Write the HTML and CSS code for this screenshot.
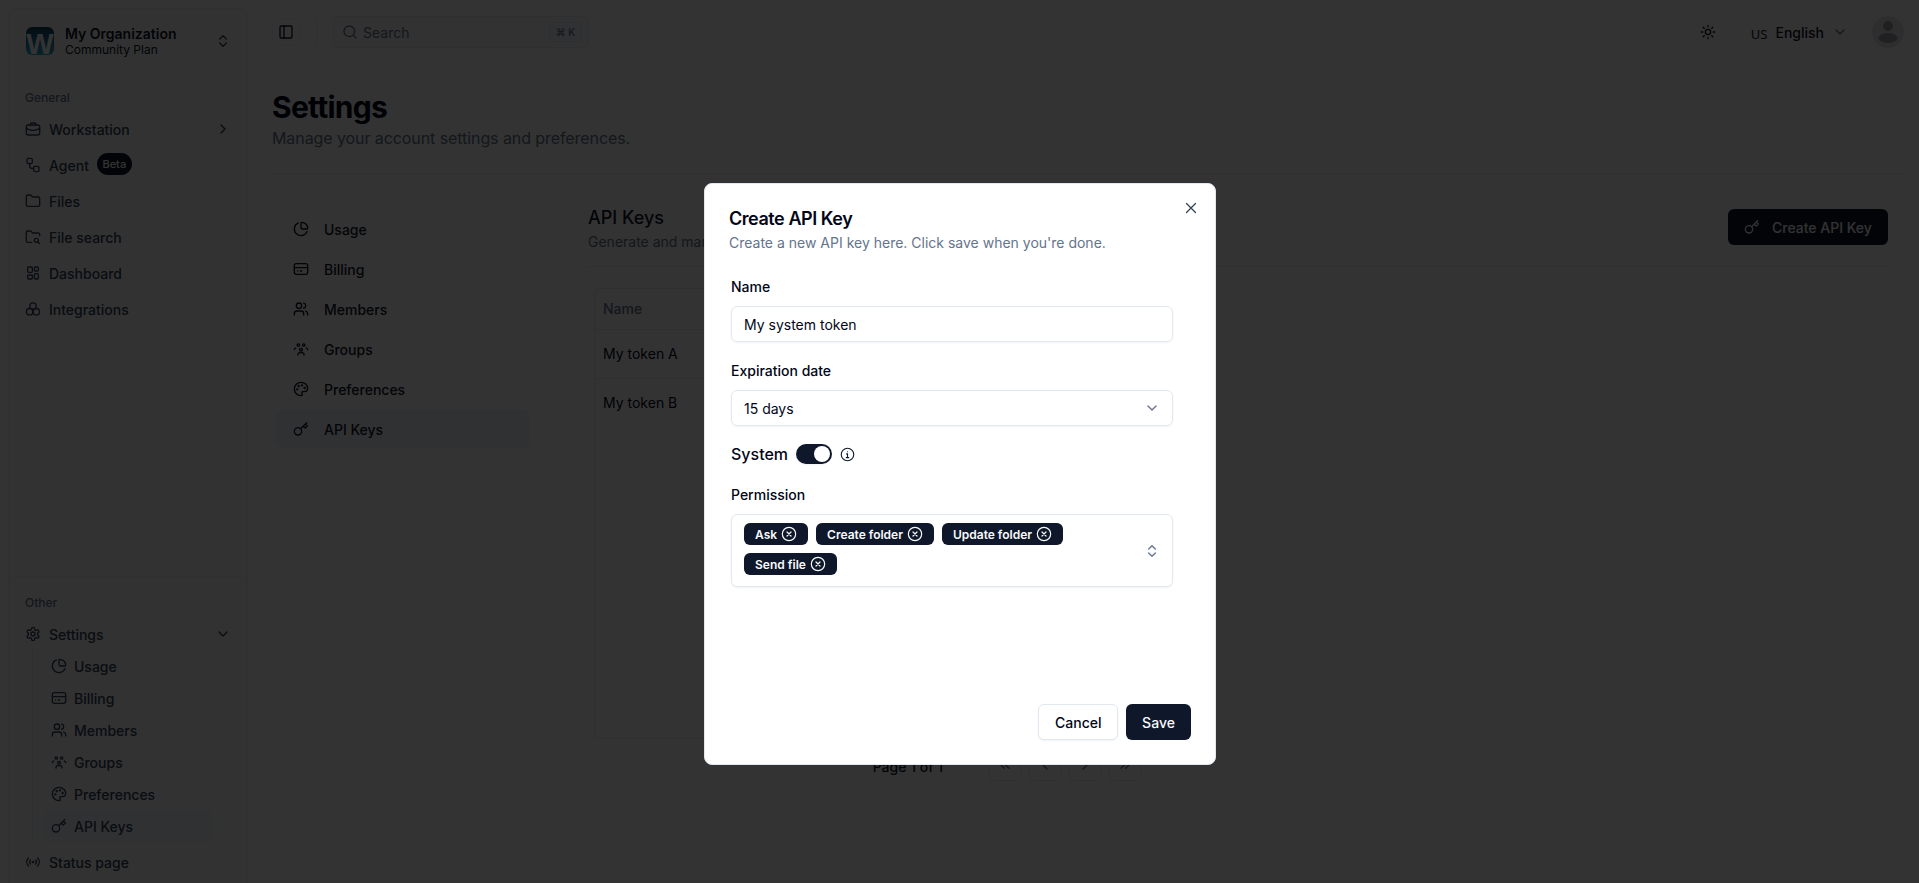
FILE: index.html
```html
<!DOCTYPE html>
<html lang="en">
<head>
<meta charset="utf-8">
<title>Settings</title>
<link rel="stylesheet" href="styles.css">
</head>
<body>
<svg class="defs" aria-hidden="true">
  <defs>
    <g id="i-usage"><path d="M21 12c.6 0 1-.4 1-1a9 9 0 0 0-9-9c-.6 0-1 .4-1 1v7c0 1.1.9 2 2 2z"/><path d="M21.2 15.9A10 10 0 1 1 8 2.8"/></g>
    <g id="i-billing"><rect x="2" y="4" width="20" height="16" rx="3"/><path d="M2 10h20M7 15h.01M11 15h2"/></g>
    <g id="i-members"><path d="M16 21v-2a4 4 0 0 0-4-4H6a4 4 0 0 0-4 4v2"/><circle cx="9" cy="7" r="4"/><path d="M22 21v-2a4 4 0 0 0-3-3.900M16 3.100a4 4 0 0 1 0 7.800"/></g>
    <g id="i-groups"><circle cx="8" cy="6" r="1.800"/><circle cx="16" cy="6" r="1.800"/><circle cx="12" cy="13" r="2"/><path d="M7.500 21v-.5a3 3 0 0 1 3-3h3a3 3 0 0 1 3 3v.5M2 13a3.500 3.500 0 0 1 2-2.500M22 13a3.500 3.500 0 0 0-2-2.500"/></g>
    <g id="i-palette"><path d="M12 22a1 1 0 0 1 0-20 10 9 0 0 1 10 9 5 5 0 0 1-5 5h-2.200a1.800 1.800 0 0 0-1.400 2.900l.3.400a1.800 1.800 0 0 1-1.700 2.700z"/><circle cx="13.500" cy="6.500" r=".8"/><circle cx="17.500" cy="10.500" r=".8"/><circle cx="6.500" cy="12.500" r=".8"/><circle cx="8.500" cy="7.500" r=".8"/></g>
    <g id="i-key"><circle cx="7.500" cy="15.500" r="5.500"/><path d="m11.500 11.500 9-9M15.500 7.500l3 3 3-3-3-3"/></g>
    <g id="i-cx"><circle cx="12" cy="12" r="10"/><path d="m15 9-6 6M9 9l6 6"/></g>
    <path id="i-down" d="m6 9 6 6 6-6"/>
    <g id="i-updown"><path d="m7 15 5 5 5-5M7 9l5-5 5 5"/></g>
  </defs>
</svg>

<div class="app">
  <aside class="sidebar">
    <div class="org">
      <div class="logo">W</div>
      <div class="org-text">
        <div class="org-name">My Organization</div>
        <div class="org-plan">Community Plan</div>
      </div>
      <svg class="ic" viewBox="0 0 24 24"><use href="#i-updown"/></svg>
    </div>

    <div class="nav-group">
      <div class="nav-label">General</div>
      <a class="nav-item">
        <svg class="ic" viewBox="0 0 24 24"><rect x="2" y="6" width="20" height="15" rx="3"/><path d="M8 6V4.500A1.500 1.500 0 0 1 9.500 3h5A1.500 1.500 0 0 1 16 4.500V6M2 11c3 2 6 3 10 3s7-1 10-3"/></svg>
        <span class="grow">Workstation</span>
        <svg class="ic" viewBox="0 0 24 24"><path d="m9 18 6-6-6-6"/></svg>
      </a>
      <a class="nav-item">
        <svg class="ic" viewBox="0 0 24 24"><rect x="3" y="2" width="8" height="8" rx="2"/><rect x="13" y="14" width="8" height="8" rx="2"/><path d="M7 10v4a3 3 0 0 0 3 3h3"/></svg>
        <span>Agent</span><span class="beta">Beta</span>
      </a>
      <a class="nav-item">
        <svg class="ic" viewBox="0 0 24 24"><path d="M20 20a2 2 0 0 0 2-2V8a2 2 0 0 0-2-2h-7.900a2 2 0 0 1-1.700-.9l-.8-1.200A2 2 0 0 0 7.900 3H4a2 2 0 0 0-2 2v13a2 2 0 0 0 2 2z"/></svg>
        <span>Files</span>
      </a>
      <a class="nav-item">
        <svg class="ic" viewBox="0 0 24 24"><path d="M10 20H4a2 2 0 0 1-2-2V5a2 2 0 0 1 2-2h3.900a2 2 0 0 1 1.700.9l.8 1.200a2 2 0 0 0 1.700.9H20a2 2 0 0 1 2 2v2"/><circle cx="17" cy="17" r="3"/><path d="m22 22-2.800-2.800"/></svg>
        <span>File search</span>
      </a>
      <a class="nav-item">
        <svg class="ic" viewBox="0 0 24 24"><rect x="4" y="3" width="7" height="8" rx="1.500"/><rect x="14" y="3" width="6" height="6" rx="1.500"/><rect x="14" y="13" width="6" height="8" rx="1.500"/><rect x="4" y="15" width="7" height="6" rx="1.500"/></svg>
        <span>Dashboard</span>
      </a>
      <a class="nav-item">
        <svg class="ic" viewBox="0 0 24 24"><circle cx="12" cy="7.500" r="4.800"/><circle cx="7" cy="16" r="4.800"/><circle cx="17" cy="16" r="4.800"/></svg>
        <span>Integrations</span>
      </a>
    </div>

    <div class="nav-spacer"></div>

    <div class="nav-group other">
      <div class="nav-label">Other</div>
      <a class="nav-item">
        <svg class="ic" viewBox="0 0 24 24"><path d="M12.200 2h-.4a2 2 0 0 0-2 2v.2a2 2 0 0 1-1 1.700l-.4.300a2 2 0 0 1-2 0l-.2-.1a2 2 0 0 0-2.700.7l-.2.400a2 2 0 0 0 .7 2.700l.2.100a2 2 0 0 1 1 1.700v.6a2 2 0 0 1-1 1.700l-.2.100a2 2 0 0 0-.7 2.700l.2.400a2 2 0 0 0 2.700.7l.2-.1a2 2 0 0 1 2 0l.4.300a2 2 0 0 1 1 1.700v.2a2 2 0 0 0 2 2h.4a2 2 0 0 0 2-2v-.2a2 2 0 0 1 1-1.700l.4-.3a2 2 0 0 1 2 0l.2.100a2 2 0 0 0 2.700-.7l.2-.4a2 2 0 0 0-.7-2.700l-.2-.1a2 2 0 0 1-1-1.700v-.6a2 2 0 0 1 1-1.700l.2-.1a2 2 0 0 0 .7-2.700l-.2-.4a2 2 0 0 0-2.700-.7l-.2.100a2 2 0 0 1-2 0l-.4-.3a2 2 0 0 1-1-1.700V4a2 2 0 0 0-2-2z"/><circle cx="12" cy="12" r="3"/></svg>
        <span class="grow">Settings</span>
        <svg class="ic" viewBox="0 0 24 24"><use href="#i-down"/></svg>
      </a>
      <div class="subnav">
        <a class="sub-item"><svg class="ic" viewBox="0 0 24 24"><use href="#i-usage"/></svg><span>Usage</span></a>
        <a class="sub-item"><svg class="ic" viewBox="0 0 24 24"><use href="#i-billing"/></svg><span>Billing</span></a>
        <a class="sub-item"><svg class="ic" viewBox="0 0 24 24"><use href="#i-members"/></svg><span>Members</span></a>
        <a class="sub-item"><svg class="ic" viewBox="0 0 24 24"><use href="#i-groups"/></svg><span>Groups</span></a>
        <a class="sub-item"><svg class="ic" viewBox="0 0 24 24"><use href="#i-palette"/></svg><span>Preferences</span></a>
        <a class="sub-item active"><svg class="ic" viewBox="0 0 24 24"><use href="#i-key"/></svg><span>API Keys</span></a>
      </div>
      <a class="nav-item">
        <svg class="ic" viewBox="0 0 24 24"><path d="M5 6a9 9 0 0 0 0 12M8 9a5 5 0 0 0 0 6M16 9a5 5 0 0 1 0 6M19 6a9 9 0 0 1 0 12"/><circle cx="12" cy="12" r="1"/></svg>
        <span>Status page</span>
      </a>
    </div>
  </aside>

  <main class="main">
    <header class="topbar">
      <button class="toggle"><svg class="ic" viewBox="0 0 24 24"><rect x="3" y="3" width="18" height="18" rx="2"/><path d="M9 3v18"/></svg></button>
      <span class="vsep"></span>
      <div class="search">
        <svg class="ic" viewBox="0 0 24 24"><circle cx="11" cy="11" r="8"/><path d="m21 21-4.300-4.300"/></svg>
        <span class="grow search-text">Search</span>
        <kbd class="kbd">⌘ K</kbd>
      </div>
      <div class="grow"></div>
      <svg class="ic sun" viewBox="0 0 24 24"><circle cx="12" cy="12" r="4"/><path d="M12 2v2M12 20v2M4.900 4.900l1.400 1.400M17.700 17.700l1.400 1.400M2 12h2M20 12h2M6.300 17.700l-1.400 1.400M19.100 4.900l-1.400 1.400"/></svg>
      <div class="lang">
        <span class="flag">US</span>
        <span>English</span>
        <svg class="ic" viewBox="0 0 24 24"><use href="#i-down"/></svg>
      </div>
      <div class="avatar">
        <svg viewBox="0 0 32 32"><circle cx="16" cy="10" r="5"/><ellipse cx="16" cy="22" rx="9.500" ry="5"/></svg>
      </div>
    </header>

    <section class="page-head">
      <h1>Settings</h1>
      <p>Manage your account settings and preferences.</p>
    </section>

    <div class="settings">
      <nav class="settings-nav">
        <a class="set-item"><svg class="ic" viewBox="0 0 24 24"><use href="#i-usage"/></svg><span>Usage</span></a>
        <a class="set-item"><svg class="ic" viewBox="0 0 24 24"><use href="#i-billing"/></svg><span>Billing</span></a>
        <a class="set-item"><svg class="ic" viewBox="0 0 24 24"><use href="#i-members"/></svg><span>Members</span></a>
        <a class="set-item"><svg class="ic" viewBox="0 0 24 24"><use href="#i-groups"/></svg><span>Groups</span></a>
        <a class="set-item"><svg class="ic" viewBox="0 0 24 24"><use href="#i-palette"/></svg><span>Preferences</span></a>
        <a class="set-item active"><svg class="ic" viewBox="0 0 24 24"><use href="#i-key"/></svg><span>API Keys</span></a>
      </nav>

      <div class="content">
        <div class="content-head">
          <div class="grow">
            <h2>API Keys</h2>
            <p>Generate and manage</p>
          </div>
          <button class="create"><svg class="ic" viewBox="0 0 24 24"><use href="#i-key"/></svg><span>Create API Key</span></button>
        </div>

        <div class="table-wrap">
          <div class="table">
            <div class="t-row t-head"><span>Name</span></div>
            <div class="t-row"><span>My token A</span></div>
            <div class="t-row"><span>My token B</span></div>
          </div>
          <div class="pager">
            <span class="pager-text">Page 1 of 1</span>
            <div class="pager-btns">
              <button><svg class="ic" viewBox="0 0 24 24"><path d="m11 17-5-5 5-5M18 17l-5-5 5-5"/></svg></button>
              <button><svg class="ic" viewBox="0 0 24 24"><path d="m15 18-6-6 6-6"/></svg></button>
              <button><svg class="ic" viewBox="0 0 24 24"><path d="m9 18 6-6-6-6"/></svg></button>
              <button><svg class="ic" viewBox="0 0 24 24"><path d="m6 17 5-5-5-5M13 17l5-5-5-5"/></svg></button>
            </div>
          </div>
        </div>
      </div>
    </div>
  </main>
</div>

<div class="overlay"></div>

<div class="dialog" role="dialog">
  <svg class="ic close" viewBox="0 0 24 24"><path d="M18 6 6 18M6 6l12 12"/></svg>
  <h3>Create API Key</h3>
  <p class="dialog-desc">Create a new API key here. Click save when you're done.</p>

  <form class="form">
    <div class="field">
      <label>Name</label>
      <div class="input">My system token</div>
    </div>
    <div class="field">
      <label>Expiration date</label>
      <div class="input select"><span class="grow">15 days</span><svg class="ic muted" viewBox="0 0 24 24"><use href="#i-down"/></svg></div>
    </div>
    <div class="system">
      <span class="system-label">System</span>
      <span class="switch"><span class="knob"></span></span>
      <svg class="ic info" viewBox="0 0 24 24"><circle cx="12" cy="12" r="10"/><path d="M12 17v-6h-1.500M10 17h4M12 7.500h.01"/></svg>
    </div>
    <div class="field">
      <label>Permission</label>
      <div class="multi">
        <div class="chips">
          <span class="chip">Ask<svg viewBox="0 0 24 24"><use href="#i-cx"/></svg></span>
          <span class="chip">Create folder<svg viewBox="0 0 24 24"><use href="#i-cx"/></svg></span>
          <span class="chip">Update folder<svg viewBox="0 0 24 24"><use href="#i-cx"/></svg></span>
          <span class="chip">Send file<svg viewBox="0 0 24 24"><use href="#i-cx"/></svg></span>
        </div>
        <svg class="ic muted" viewBox="0 0 24 24"><use href="#i-updown"/></svg>
      </div>
    </div>
  </form>

  <div class="dialog-foot">
    <button class="btn btn-outline">Cancel</button>
    <button class="btn btn-primary">Save</button>
  </div>
</div>
</body>
</html>
```
FILE: styles.css
```css
* { box-sizing: border-box; }
html, body { margin: 0; height: 883px; overflow: hidden; }
body { font-family: Inter, "Liberation Sans", sans-serif; font-size: 14px; color: #020617; background: #fff; }
h1, h2, h3, p { margin: 0; }
button { font-family: inherit; }
.defs { width: 0; height: 0; position: absolute; }
.grow { flex: 1 1 auto; }

.ic { width: 16px; height: 16px; flex: none; fill: none; stroke: currentColor; stroke-width: 2; stroke-linecap: round; stroke-linejoin: round; }
.muted { color: #64748b; }

.app { display: flex; height: 883px; padding-left: 8px; }

/* sidebar */
.sidebar { width: 240px; flex: none; margin-top: 8px; height: 883px; padding: 0 8px; background: #f8fafc; border: 1px solid #e9edf2; border-radius: 8px 8px 0 0; display: flex; flex-direction: column; color: #334155; }
.org { display: flex; align-items: center; gap: 11px; padding: 8px 8px 0 9px; height: 56px; }
.logo { width: 28px; height: 28px; flex: none; border-radius: 6px; background: linear-gradient(180deg, #12405a 0%, #1d7fa8 60%, #22b0c8 100%); color: #fff; font: 700 29px/22px "Liberation Sans", sans-serif; display: flex; align-items: flex-end; justify-content: center; }
.org-text { flex: 1; min-width: 0; padding-top: 2px; }
.org-name { font-size: 14px; font-weight: 600; line-height: 16px; color: #0f172a; }
.org-plan { font-size: 12px; line-height: 16px; color: #0f172a; }
.nav-group { display: flex; flex-direction: column; }
.nav-group:not(.other) { margin-top: 19px; }
.nav-label { font-size: 12px; height: 27px; line-height: 28px; padding-left: 8px; color: #64748b; font-weight: 500; }
.nav-item { display: flex; align-items: center; gap: 8px; height: 36px; padding: 0 8px; font-size: 14px; font-weight: 500; }
.nav-spacer { flex: none; height: 250px; border-bottom: 1px solid #e9edf2; margin: 0 -8px; }
.other { padding-top: 12px; }
.beta { background: #0f172a; color: #fff; font-size: 11px; font-weight: 500; line-height: 16px; padding: 3px 5.500px; border-radius: 999px; margin-top: -2px; }
.subnav { margin: -4px 26px 2px 15px; padding: 2px 0 0 10px; border-left: 1px solid #e2e8f0; display: flex; flex-direction: column; }
.sub-item { display: flex; align-items: center; gap: 7px; height: 32px; padding: 0 8px; font-weight: 500; }
.sub-item.active { background: #f1f5f9; border-radius: 6px; }

/* main */
.main { flex: 1; min-width: 0; padding: 0 15px 0 24px; }
.topbar { display: flex; align-items: center; height: 64px; }
.toggle { width: 28px; height: 28px; padding: 0; display: flex; align-items: center; justify-content: center; background: #fff; border: 1px solid #eef1f5; border-radius: 6px; color: #0f172a; }
.vsep { width: 1px; height: 23px; background: #e2e8f0; margin: 0 16px; }
.search { width: 256px; height: 32px; display: flex; align-items: center; gap: 5px; padding: 0 6px 0 8px; border: 1px solid #e2e8f0; border-radius: 6px; color: #64748b; background: #f8fafc; }
.search-text { padding-top: 1px; }
.kbd { font: 500 10px Inter, sans-serif; width: 33px; height: 20px; display: flex; align-items: center; justify-content: center; border: 1px solid #e2e8f0; border-radius: 4px; background: #f1f5f9; }
.sun { color: #0f172a; margin-right: 35px; }
.lang { display: flex; align-items: center; gap: 8px; color: #0f172a; font-weight: 500; margin-right: 24px; }
.lang .ic { color: #64748b; }
.flag { font: 400 13px "Noto Sans", sans-serif; padding-top: 3px; }
.avatar { width: 32px; height: 32px; border-radius: 50%; background: #e5e7eb; overflow: hidden; }
.avatar svg { display: block; width: 32px; height: 32px; fill: #a1a1aa; }

.page-head { padding: 24px 0 23px; border-bottom: 1px solid #e2e8f0; }
h1 { font-size: 30px; line-height: 38px; font-weight: 700; letter-spacing: -.75px; color: #020617; }
.page-head p { font-size: 16px; line-height: 24px; letter-spacing: -.08px; color: #64748b; }

.settings { display: flex; }
.settings-nav { width: 254px; flex: none; margin: 36px 0 0 4px; display: flex; flex-direction: column; gap: 2px; }
.set-item { display: flex; align-items: center; gap: 15px; height: 38px; padding: 0 16px 0 17px; font-weight: 500; color: #0f172a; }
.set-item.active { background: #f1f5f9; border-radius: 8px; }
.content { flex: 1; min-width: 0; margin: 32px 16px 0 58px; }
.content-head { display: flex; height: 61px; border-bottom: 1px solid #e2e8f0; }
h2 { font-size: 18px; line-height: 22px; font-weight: 500; color: #0f172a; padding-top: 1px; box-sizing: content-box; }
.content-head p { font-size: 14px; line-height: 20px; margin-top: 3px; color: #64748b; }
.create { display: flex; align-items: center; gap: 12px; margin-top: 3px; height: 36px; width: 160px; padding: 0 16px; border: 0; border-radius: 6px; background: #0f172a; color: #f8fafc; font-size: 14px; font-weight: 500; white-space: nowrap; }
.table-wrap { width: 547px; margin: 21px 0 0 6px; }
.table { height: 451px; border: 1px solid #e2e8f0; border-radius: 6px; }
.t-row { display: flex; align-items: center; padding: 0 8px 2px; height: 49px; border-bottom: 1px solid #e2e8f0; }
.t-row:last-child { border-bottom: 0; }
.t-head { height: 41px; color: #64748b; font-weight: 500; }
.pager { display: flex; align-items: center; justify-content: flex-end; margin-top: 10px; height: 32px; gap: 46px; }
.pager-text { font-weight: 500; color: #0f172a; padding-top: 2px; }
.pager-btns { display: flex; gap: 8px; }
.pager-btns button { width: 32px; height: 32px; padding: 0; display: flex; align-items: center; justify-content: center; background: #fff; border: 1px solid #e2e8f0; border-radius: 6px; color: #64748b; }

/* overlay + dialog */
.overlay { position: fixed; inset: 0; background: rgba(0, 0, 0, .8); }
.dialog { position: fixed; left: 704px; top: 183px; width: 512px; height: 582px; background: #fff; border: 1px solid #e2e8f0; border-radius: 8px; padding: 24px; display: flex; flex-direction: column; color: #020617; }
.close { position: absolute; top: 15px; right: 15px; width: 18px; height: 18px; stroke-width: 1.700; color: #334155; }
h3 { font-size: 18px; line-height: 20px; font-weight: 600; letter-spacing: -.45px; margin-top: 1px; }
.dialog-desc { margin-top: 4px; font-size: 14px; line-height: 20px; color: #64748b; }
.form { flex: 1; display: flex; flex-direction: column; padding: 0 18px 0 2px; margin-top: 27px; }
.field { display: flex; flex-direction: column; }
.field label { font-size: 14px; line-height: 14px; font-weight: 500; margin-bottom: 12px; }
.input { height: 36px; display: flex; align-items: center; padding: 0 12px; border: 1px solid #e2e8f0; border-radius: 6px; box-shadow: 0 1px 2px rgba(0,0,0,.05); }
.field + .field { margin-top: 22px; }
.system { display: flex; align-items: center; height: 20px; margin-top: 18px; }
.system-label { font-size: 16px; font-weight: 500; margin-right: 8px; }
.switch { width: 36px; height: 20px; background: #0f172a; border-radius: 10px; display: flex; align-items: center; justify-content: flex-end; padding: 2px; margin-right: 8px; box-shadow: 0 1px 2px rgba(0,0,0,.05); }
.knob { width: 16px; height: 16px; background: #fff; border-radius: 50%; }
.info { width: 15px; height: 15px; stroke-width: 1.800; color: #0f172a; }
.system + .field { margin-top: 24px; }
.multi { display: flex; align-items: center; min-height: 73px; padding: 8px 12px; border: 1px solid #e2e8f0; border-radius: 6px; box-shadow: 0 1px 2px rgba(0,0,0,.05); }
.chips { flex: 1; align-self: flex-start; display: flex; flex-wrap: wrap; gap: 8px; }
.chip { display: inline-flex; align-items: center; gap: 4px; height: 22px; padding: 0 11px; background: #0f172a; color: #f8fafc; font-size: 12px; font-weight: 600; border-radius: 6px; }
.chip svg { width: 16px; height: 16px; fill: none; stroke: currentColor; stroke-width: 1.800; stroke-linecap: round; stroke-linejoin: round; }
.dialog-foot { display: flex; justify-content: flex-end; gap: 8px; }
.btn { height: 36px; border-radius: 6px; font-size: 14px; font-weight: 500; padding: 0 16px; cursor: pointer; }
.btn-outline { width: 80px; background: #fff; border: 1px solid #e2e8f0; color: #020617; box-shadow: 0 1px 2px rgba(0,0,0,.05); }
.btn-primary { width: 65px; background: #0f172a; border: 0; color: #f8fafc; }
```
